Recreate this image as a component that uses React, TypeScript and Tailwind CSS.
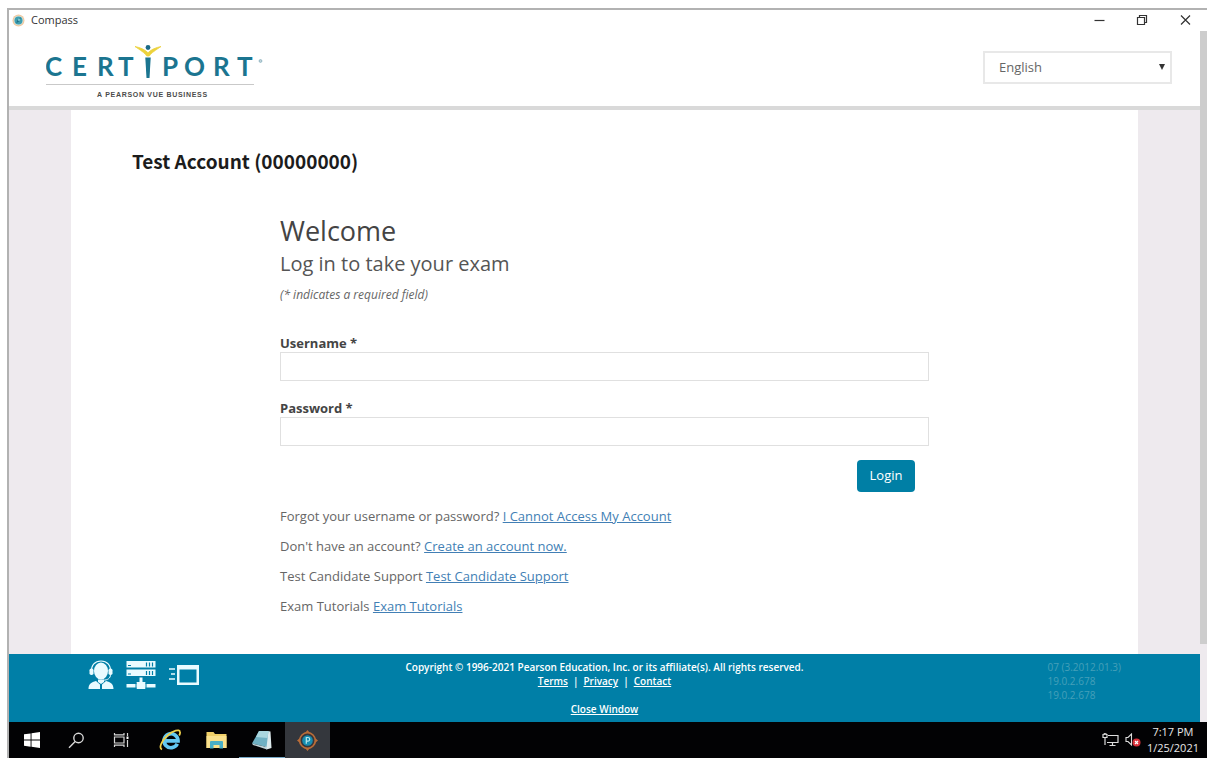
import type { ReactNode } from "react";

const supportLinks = [
  { text: "Forgot your username or password?", link: "I Cannot Access My Account" },
  { text: "Don't have an account?", link: "Create an account now." },
  { text: "Test Candidate Support", link: "Test Candidate Support" },
  { text: "Exam Tutorials", link: "Exam Tutorials" },
];

function CompassIcon() {
  return (
    <svg width="13" height="13" viewBox="0 0 13 13" aria-hidden="true">
      <circle cx="6.5" cy="6.5" r="6" fill="#f0c9a0" />
      <circle cx="6.5" cy="6.5" r="4.800" fill="#d9e3dc" />
      <circle cx="6.5" cy="6.5" r="4" fill="#3f9fb0" />
      <path d="M8.8 3.6 7.4 7.2 4.2 9.2 5.6 5.6Z" fill="#1f7088" />
      <circle cx="7" cy="5.8" r="1.2" fill="#7cc6cf" />
    </svg>
  );
}

function Logo() {
  return (
    <svg width="220" height="60" viewBox="0 0 220 60" role="img" aria-label="Certiport, a Pearson VUE business">
      <text
        x="-1 26 51 72 116 138 167 191"
        y="34"
        fill="#1b7590"
        fontSize="26"
        fontWeight="700"
        fontFamily="Lato, sans-serif"
      >
        CERTPORT
      </text>
      <path d="M99.300 15.500h5.400L103.500 36h-3Z" fill="#1b7590" />
      <circle cx="102" cy="5.500" r="2.400" fill="#1b6a86" />
      <path d="M89 4.500C94 5.500 99 7.500 102 10.800 105 7.500 110 5.500 115 4.500 110 8 105 11 103.300 14h-2.600C99 11 94 8 89 4.500Z" fill="#ecd23c" stroke="#ecd23c" strokeWidth="0.800" />
      <circle cx="214.500" cy="19" r="1.400" fill="#c3d6dd" stroke="#8fb3c0" strokeWidth="0.900" />
      <path d="M0 42.500h208" stroke="#c9c9c9" />
      <text
        x="51"
        y="55"
        fill="#4c4c4c"
        fontSize="7"
        fontWeight="700"
        fontFamily="Liberation Sans, sans-serif"
        className="tracking-widest"
      >
        A PEARSON VUE BUSINESS
      </text>
    </svg>
  );
}

function TitleBar() {
  return (
    <div className="flex h-[21px] items-center justify-between pl-[3px] pr-[15px]">
      <div className="flex items-center gap-[6px] text-[11px] text-[#333]">
        <CompassIcon />
        <span>Compass</span>
      </div>
      <div className="flex items-center gap-[30px] text-[#333]">
        <button type="button" aria-label="Minimize" className="h-[13px] w-[13px]">
          <svg width="13" height="13" viewBox="0 0 13 13" stroke="currentColor">
            <path d="M1.500 6.500h10" strokeWidth="1.200" />
          </svg>
        </button>
        <button type="button" aria-label="Restore" className="h-[13px] w-[13px]">
          <svg width="13" height="13" viewBox="0 0 13 13" fill="none" stroke="currentColor" strokeWidth="1.200">
            <path d="M1.500 3.500h7v7h-7zM3.500 3.500v-2h7v7h-2" />
          </svg>
        </button>
        <button type="button" aria-label="Close" className="h-[13px] w-[13px]">
          <svg width="13" height="13" viewBox="0 0 13 13" stroke="currentColor" strokeWidth="1.200">
            <path d="M2 1.500l9 9M11 1.500l-9 9" />
          </svg>
        </button>
      </div>
    </div>
  );
}

function Header() {
  return (
    <header className="flex h-[79px] items-start justify-between border-b-4 border-[#d9d9d9] pl-[37px] pr-7">
      <div className="pt-[11px]">
        <Logo />
      </div>
      <div className="relative mt-5 w-[189px]">
        <select
          aria-label="Language"
          defaultValue="English"
          className="h-[33px] w-full appearance-none border-2 border-[#e8e8e8] bg-white pl-[14px] text-[13px] text-[#666]"
        >
          <option>English</option>
        </select>
        <svg className="pointer-events-none absolute right-[7px] top-[13px]" width="6" height="6" viewBox="0 0 6 6" aria-hidden="true">
          <path d="M0 0h6L3 6Z" fill="#333" />
        </svg>
      </div>
    </header>
  );
}

function Field({ id, label, type }: { id: string; label: string; type: string }) {
  return (
    <div>
      <label htmlFor={id} className="block h-[18px] text-[13px] font-bold leading-[18px] text-[#444]">
        {label}
      </label>
      <input id={id} type={type} className="block h-[29px] w-full border border-[#e0e0e0] bg-white px-2 text-[13px] text-[#444]" />
    </div>
  );
}

function LoginForm() {
  return (
    <form className="mx-auto w-full max-w-[649px]" onSubmit={(e) => e.preventDefault()}>
      <h1 className="text-[27px] leading-9 text-[#444]">Welcome</h1>
      <h2 className="mt-[1px] text-[20px] leading-7 text-[#555]">Log in to take your exam</h2>
      <p className="mt-[7px] text-[12px] italic leading-5 text-[#666]">(* indicates a required field)</p>
      <div className="mt-[29px] flex flex-col gap-[18px]">
        <Field id="username" label="Username *" type="text" />
        <Field id="password" label="Password *" type="password" />
      </div>
      <div className="mt-[14px] flex justify-end pr-[14px]">
        <button type="submit" className="h-8 w-[58px] rounded-[4px] bg-[#007fa5] text-[13px] text-white">
          Login
        </button>
      </div>
      <div className="mt-[9px] text-[13px] leading-[30px] text-[#666]">
        {supportLinks.map((row) => (
          <p key={row.text}>
            {row.text}{" "}
            <a href="#" className="text-[#427fb5] underline">
              {row.link}
            </a>
          </p>
        ))}
      </div>
    </form>
  );
}

function SupportIcon() {
  return (
    <svg width="26" height="30" viewBox="0 0 26 30" fill="#e9fbff" aria-hidden="true">
      <ellipse cx="13" cy="11" rx="7" ry="8.600" />
      <path d="M3.500 12C3 5 7 1 13 1s10 4 9.500 11" fill="none" stroke="#e9fbff" strokeWidth="1.200" />
      <rect x="1.500" y="8.500" width="4" height="6.500" rx="1.800" />
      <rect x="20.500" y="8.500" width="4" height="6.500" rx="1.800" />
      <path d="M22.500 14.500c0 4-3 5.500-7 5.700" fill="none" stroke="#e9fbff" />
      <path d="M.5 29c0-5 3-7 7.500-8l4 3.500V29ZM25.500 29c0-5-3-7-7.500-8l-4 3.500V29Z" />
      <path d="M10 19.500h6v2.500l-3 2-3-2Z" />
    </svg>
  );
}

function ServerIcon() {
  return (
    <svg width="30" height="30" viewBox="0 0 30 30" fill="#e9fbff" aria-hidden="true">
      <rect x="0.500" y="1" width="29" height="6.500" />
      <rect x="0.500" y="9.500" width="29" height="6.500" />
      <path d="M20.500 2.500v4M23.500 2.500v4M26.500 2.500v4M20.500 11v4M23.500 11v4M26.500 11v4M2 5.500h3M2 14h3" stroke="#007fa7" strokeWidth="1.200" />
      <path d="M13.500 17.500h3V22h3v2h10v3.500h-10V29h-9v-1.500h-10V24h10v-2h3Z" />
      <path d="M10 22.500v7M20 22.500v7" stroke="#007fa7" />
    </svg>
  );
}

function WindowIcon() {
  return (
    <svg width="31" height="22" viewBox="0 0 31 22" aria-hidden="true">
      <path d="M1 5h6M3 10h4M1 15h6" stroke="#e9fbff" strokeWidth="1.700" />
      <path fillRule="evenodd" d="M9 1h22v20H9ZM11.500 5.500v13h17v-13Z" fill="#e9fbff" />
    </svg>
  );
}

function Footer() {
  return (
    <footer className="grid h-[68px] grid-cols-[1fr_auto_1fr] bg-[#007fa7] text-[10px] leading-[14px] text-white">
      <div className="flex items-start gap-3 pl-[79px] pt-[6px]">
        <SupportIcon />
        <ServerIcon />
        <div className="pt-1">
          <WindowIcon />
        </div>
      </div>
      <div className="pt-[6px] text-center font-semibold">
        <p>Copyright © 1996-2021 Pearson Education, Inc. or its affiliate(s). All rights reserved.</p>
        <p className="flex justify-center gap-[5px]">
          <a href="#" className="underline">Terms</a>
          <span>|</span>
          <a href="#" className="underline">Privacy</a>
          <span>|</span>
          <a href="#" className="underline">Contact</a>
        </p>
        <p className="mt-[14px]">
          <a href="#" className="underline">Close Window</a>
        </p>
      </div>
      <div className="flex justify-end pr-[79px] pt-[6px] text-[#459fb9]">
        <p>
          07 (3.2012.01.3)
          <br />
          19.0.2.678
          <br />
          19.0.2.678
        </p>
      </div>
    </footer>
  );
}

function TaskButton({ label, className, children }: { label: string; className: string; children: ReactNode }) {
  return (
    <button type="button" aria-label={label} className={`flex h-full items-center justify-center ${className}`}>
      {children}
    </button>
  );
}

function Taskbar() {
  return (
    <nav className="flex h-9 items-stretch justify-between bg-[#020204]">
      <div className="flex">
        <TaskButton label="Start" className="w-[45px]">
          <svg width="16" height="16" viewBox="0 0 16 16" fill="#fff">
            <path d="M0 2.300 6.600 1.400v6.200H0ZM7.500 1.200 16 0v7.600H7.500ZM0 8.500h6.600v6.200L0 13.800ZM7.500 8.500H16V16l-8.500-1.200Z" />
          </svg>
        </TaskButton>
        <TaskButton label="Search" className="w-[45px]">
          <svg width="17" height="17" viewBox="0 0 17 17" fill="none" stroke="#d8d8d8" strokeWidth="1.400">
            <circle cx="10.500" cy="6" r="4.700" />
            <path d="M7.200 9.400 1 15.800" />
          </svg>
        </TaskButton>
        <TaskButton label="Task view" className="w-[45px]">
          <svg width="17" height="16" viewBox="0 0 17 16" fill="none" stroke="#d8d8d8" strokeWidth="1.200">
            <path d="M1.500 5h9.500v6H1.500ZM1.500 1v1.800H11V1M1.500 15v-1.800H11V15M14.500 1v3M14.500 8v7" />
            <path d="M13.500 4.500h2v2.500h-2z" fill="#fff" stroke="none" />
          </svg>
        </TaskButton>
        <TaskButton label="Internet Explorer" className="ml-[3px] w-[46px]">
          <svg width="23" height="22" viewBox="0 0 23 22" fill="none">
            <path d="M18.300 14.800A7 7 0 1 1 19 11.800H7" stroke="#63c8f2" strokeWidth="3.700" />
            <path d="M3 20.500C-.5 19 2.500 11.500 9 6 14 1.800 20.500-.3 21 3c.2 1-.2 2.500-.8 3.500" stroke="#efd04a" strokeWidth="1.800" />
          </svg>
        </TaskButton>
        <TaskButton label="File Explorer" className="w-[46px]">
          <svg width="21" height="18" viewBox="0 0 21 18">
            <path d="M.5 1h7l1.500 2h11.500v14H.5Z" fill="#f0cf68" />
            <path d="M.5 5h20v12H.5Z" fill="#fae18d" />
            <path d="M4 17.500V11q0-1 1-1h11q1 0 1 1v6.500h-3.500V14h-6v3.500Z" fill="#49afc7" />
          </svg>
        </TaskButton>
        <TaskButton label="Notepad" className="w-[46px] border-b border-[#77a9c7]">
          <svg width="22" height="20" viewBox="0 0 22 20">
            <path d="M16.500 1l3 .5 1 16.500-5 1.500L14 16Z" fill="#dce9ec" />
            <path d="M8 1h9.500L15.500 17 1 13.500Z" fill="#6fb0c3" />
            <path d="M8 1h9.500l-1 7L5 7Z" fill="#a9d6df" />
            <path d="M1 13.500 15.500 17l.5 2.500L2 15Z" fill="#c0d3d9" />
          </svg>
        </TaskButton>
        <TaskButton label="Compass" className="w-[45px] bg-[#34373d]">
          <svg width="21" height="21" viewBox="0 0 21 21" fill="none">
            <circle cx="10.500" cy="10.500" r="7.800" stroke="#b96c38" strokeWidth="1.700" />
            <path d="M10.500 0 13 3H8ZM10.500 21 8 18h5ZM0 10.500 3 8v5ZM21 10.500 18 13V8Z" fill="#b96c38" />
            <circle cx="10.500" cy="10.500" r="5.300" fill="#168db0" />
            <path d="M9.300 13.800V7.500h1.600a1.800 1.800 0 0 1 0 3.600H9.300" stroke="#b5e6ee" strokeWidth="1.200" />
          </svg>
        </TaskButton>
      </div>
      <div className="flex items-center gap-[6px] pr-2">
        <svg width="17" height="14" viewBox="0 0 17 14" fill="none" stroke="#ddd" strokeWidth="1.200" role="img" aria-label="Network">
          <path d="M6 2.500h10v7H5M10.500 9.500v3M7.500 12.500h6" />
          <path d="M1 1v3.500h4V1M2.300 0v2M3.800 0v2M3 4.500V12" />
        </svg>
        <svg width="16" height="14" viewBox="0 0 16 14" fill="none" role="img" aria-label="Volume muted">
          <path d="M1 4.500h2L6.500 1v11L3 8.500H1Z" stroke="#ddd" strokeWidth="1.100" />
          <circle cx="11.500" cy="9.500" r="4" fill="#d8303a" />
          <path d="m10 8 3 3M13 8l-3 3" stroke="#fff" strokeWidth="1.200" />
        </svg>
        <p className="text-center text-[11px] leading-4 text-[#e8e8e8]">
          7:17 PM
          <br />
          1/25/2021
        </p>
      </div>
    </nav>
  );
}

export default function App() {
  return (
    <div className="flex min-h-screen bg-white pb-2 pl-[7px] pr-2 pt-2 font-['Open_Sans','Noto_Sans',sans-serif]">
      <div className="flex flex-1 flex-col border-l-2 border-t-2 border-[#b2b2b2]">
        <TitleBar />
        <div className="flex flex-1">
          <div className="flex flex-1 flex-col">
            <Header />
            <main className="flex flex-1 bg-[#eeeaee] px-[62px]">
              <div className="flex-1 bg-white pb-6 pt-[35px]">
                <p className="pl-[61px] font-['Noto_Sans_CJK_SC',sans-serif] text-[19px] font-bold leading-8 text-[#1c1c1c]">
                  Test Account (00000000)
                </p>
                <div className="pt-9">
                  <LoginForm />
                </div>
              </div>
            </main>
            <Footer />
          </div>
          <div className="w-[7px] bg-[#eeeaee] pb-[78px]">
            <div className="h-full bg-[#cdcdcd]" />
          </div>
        </div>
        <Taskbar />
      </div>
    </div>
  );
}
